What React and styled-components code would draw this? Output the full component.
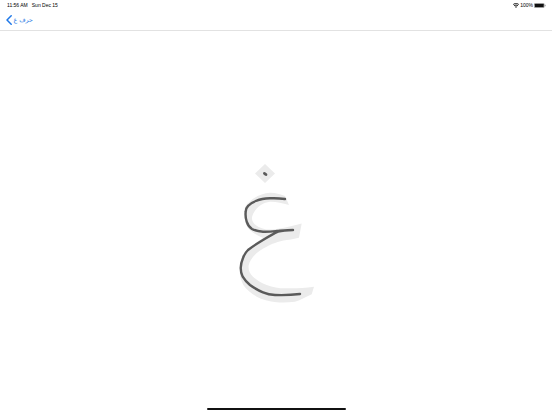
import React from "react";
import styled, { createGlobalStyle } from "styled-components";

const GlobalStyle = createGlobalStyle`
  html, body {
    margin: 0;
    padding: 0;
    background: #ffffff;
  }
  body {
    font-family: "Liberation Sans", Arial, sans-serif;
  }
`;

const Screen = styled.div`
  width: 552px;
  height: 414px;
  display: flex;
  flex-direction: column;
  background: #ffffff;
  overflow: hidden;
`;

const Header = styled.header`
  height: 30px;
  flex-shrink: 0;
  display: flex;
  flex-direction: column;
  background: #ffffff;
  border-bottom: 1px solid #e2e2e2;
`;

const StatusBar = styled.div`
  height: 10px;
  display: flex;
  align-items: center;
  justify-content: space-between;
  padding: 0 6px 0 7px;
  font-size: 5px;
  color: #000000;
`;

const StatusGroup = styled.div`
  display: flex;
  align-items: center;
  gap: ${(p) => p.$gap}px;
`;

const NavBar = styled.nav`
  flex: 1;
  display: flex;
  align-items: center;
  gap: 1.5px;
  padding: 0 0 1px 6px;
`;

const BackTitle = styled.span`
  font-family: "DejaVu Sans", "Noto Sans", sans-serif;
  font-size: 6.2px;
  color: #2a7ae4;
  direction: rtl;
`;

const Canvas = styled.main`
  flex: 1;
  display: flex;
  justify-content: center;
  padding-top: 131px;
`;

const HomeArea = styled.div`
  height: 13px;
  flex-shrink: 0;
  display: flex;
  justify-content: center;
  padding-top: 7px;
  box-sizing: border-box;
`;

const HomeBar = styled.div`
  width: 139px;
  height: 2px;
  border-radius: 1px;
  background: #111111;
`;

const WifiIcon = () => (
  <svg width="6" height="5" viewBox="0 0 12 10" fill="#222222">
    <path d="M6 10 3.9 7.4a3.4 3.4 0 0 1 4.2 0ZM3.1 6.4 1.7 4.7a6.8 6.8 0 0 1 8.6 0L8.9 6.4a4.6 4.6 0 0 0-5.8 0ZM1 3.8 0 2.5a9.4 9.4 0 0 1 12 0L11 3.8a7.8 7.8 0 0 0-10 0Z" />
  </svg>
);

const BatteryIcon = () => (
  <svg width="12" height="5" viewBox="0 0 24 10">
    <rect x="0.5" y="0.5" width="20" height="9" rx="2" fill="none" stroke="#777777" />
    <rect x="1.5" y="1.5" width="18" height="7" rx="1" fill="#111111" />
    <rect x="21.5" y="3.5" width="1.5" height="3" fill="#777777" />
  </svg>
);

const BackChevron = () => (
  <svg width="6" height="10" viewBox="0 0 6 10" fill="none">
    <path d="M5.2 .8 1 5l4.2 4.2" stroke="#1f78e8" strokeWidth="1.5" strokeLinecap="round" strokeLinejoin="round" />
  </svg>
);

// coordinates in the viewBox are page pixels
const LetterGhain = () => (
  <svg width="80" height="142" viewBox="236 162 80 142">
    <path d="M265 164 275 173.5 265 183 255 173.5Z" fill="#ebebeb" />
    <path
      d="M285 196 L289 205 C282 203 276 201.5 270 201.7 C262 202.5 254 209 252 217 C251.5 223 256 227 266 229.5 C278 230 291 226 301.7 223.5 L299 237.7 C294 239 290 239.5 286.7 240 C278 241.5 271 244 266.7 246.7 C258 250.5 250 258 248.5 266 C248.5 271 250 274 253 276.7 C257 280.5 261 283 266.7 285 C273 287.5 280 288.5 286.7 288.3 C296 288.5 305 288 314 286.7 L311.7 294.3 C306 297 301 300 295 301.7 C289 302.5 283 302.8 276.7 302.3 C269 301.5 262 299.5 256.7 296.7 C251 293.5 246.5 289.5 243.3 285 C241 280 239.5 276 240 271.7 C240 266 241 261 243 256.7 C248 249 255 243 263 238 C257 235 251 232 248 228 C244 222 243.5 213 245 207 C250 199 260 193.5 270 192.7 C275 192.5 280 194 285 196Z"
      fill="#ebebeb"
    />
    <ellipse cx="265.2" cy="174" rx="2.4" ry="1.5" transform="rotate(30 265.2 174)" fill="#5a5a5a" />
    <path
      d="M285 199 C280 198.3 275 198 270 198.3 C264 198.6 260 199.3 256.7 200.7 C253 202 250 203.8 248.3 205.7 C246.5 207.5 245.8 209.5 245.7 211.7 C245.4 215 245.7 219 246.7 221.7 C247.6 224.5 249.5 227.5 252 229 C255 230.6 259 231.4 263 231.7 C269 231.9 273 231.4 277 231 C282 230.6 288 230 293 230 M293 230 C288 230 283 230.2 278 231.7 C273 234 268 237 263 240 C258 243 253 246 248 250 C245.5 252.5 244 255 243 258 C241.5 261.5 240.8 265 240.7 268 C240.7 271.5 241.3 274 242.7 276.7 C244.5 279.8 247 282.5 250 285 C254 288 258.5 290.5 263 292.3 C267 294 271 294.8 275 295 C283 295.3 292 295 300 294"
      fill="none"
      stroke="#5a5a5a"
      strokeWidth="2.4"
      strokeLinecap="round"
      strokeLinejoin="round"
    />
  </svg>
);

export default function App() {
  return (
    <>
      <GlobalStyle />
      <Screen>
        <Header>
          <StatusBar>
            <StatusGroup $gap={4}>
              <span>11:56 AM</span>
              <span>Sun Dec 15</span>
            </StatusGroup>
            <StatusGroup $gap={1}>
              <WifiIcon />
              <span>100%</span>
              <BatteryIcon />
            </StatusGroup>
          </StatusBar>
          <NavBar>
            <BackChevron />
            <BackTitle>حرف غ</BackTitle>
          </NavBar>
        </Header>
        <Canvas>
          <LetterGhain />
        </Canvas>
        <HomeArea>
          <HomeBar />
        </HomeArea>
      </Screen>
    </>
  );
}
